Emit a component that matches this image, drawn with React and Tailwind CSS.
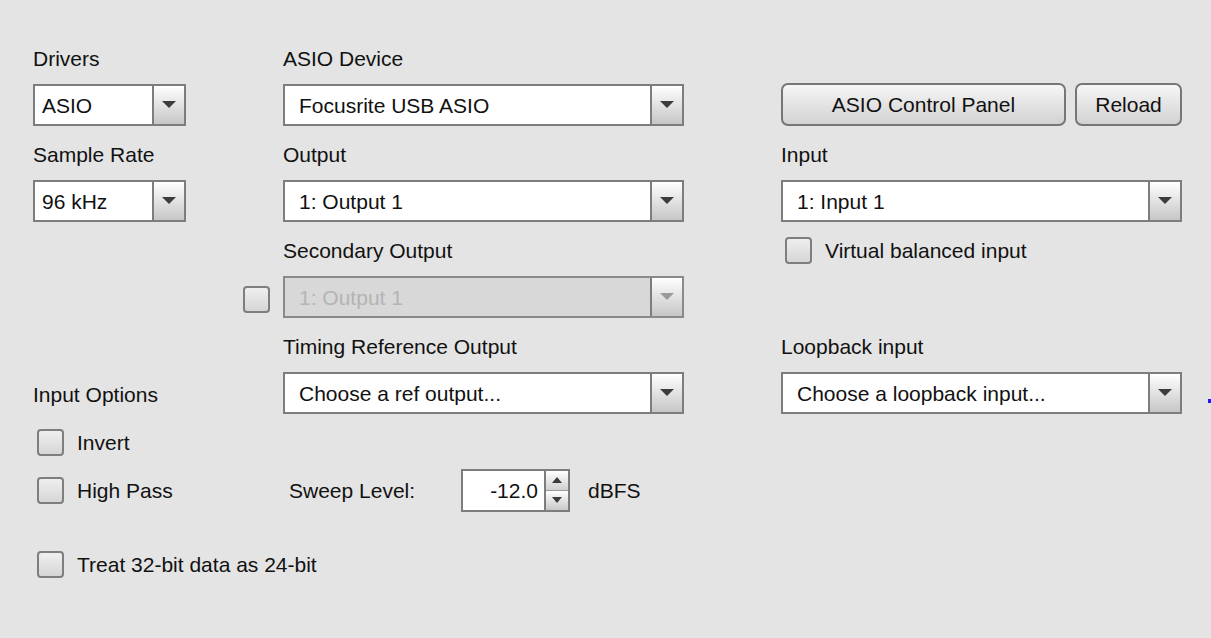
import { useState } from 'react';

const Arrow = ({ disabled }) => (
  <svg width="14" height="8" viewBox="0 0 14 8">
    <path d="M0 0h14L7 7z" fill={disabled ? '#9a9a9a' : '#3c3c3c'} />
  </svg>
);

const Combo = ({ value, disabled, pad = 'pl-[14px]' }) => (
  <div
    className={`flex h-[42px] w-full border-2 ${
      disabled ? 'border-[#8a8a8a] bg-[#d8d8d8] text-[#b4b4b4]' : 'border-[#7d7d7d] bg-white text-[#111]'
    }`}
  >
    <div className={`flex flex-1 items-center ${pad} whitespace-nowrap`}>{value}</div>
    <div className="flex w-[32px] items-center justify-center border-l-2 border-[#7d7d7d] bg-gradient-to-b from-white to-[#c6c6c6]">
      <Arrow disabled={disabled} />
    </div>
  </div>
);

const Check = ({ checked, onChange }) => (
  <button
    type="button"
    onClick={onChange}
    className="flex h-[27px] w-[27px] shrink-0 items-center justify-center rounded-[4px] border-2 border-[#7e7e7e] bg-gradient-to-b from-[#efefef] to-[#d6d6d6]"
  >
    {checked && <span className="text-[16px] leading-none text-[#222]">✓</span>}
  </button>
);

const Label = ({ children, className = '' }) => (
  <div className={`flex h-[48px] items-center ${className}`}>{children}</div>
);

const Button = ({ children, className = '' }) => (
  <button
    type="button"
    className={`flex h-[43px] items-center justify-center rounded-[7px] border-2 border-[#767676] bg-gradient-to-b from-[#f6f6f6] to-[#d2d2d2] text-[#111] ${className}`}
  >
    {children}
  </button>
);

export default function App() {
  const [checks, setChecks] = useState({});
  const toggle = (k) => setChecks((c) => ({ ...c, [k]: !c[k] }));

  return (
    <div
      className="relative h-[638px] w-full overflow-hidden bg-[#e4e4e4] pl-[33px] pt-[34px] text-[21px] leading-none text-[#111]"
      style={{ fontFamily: '"Liberation Sans", Arial, sans-serif' }}
    >
      <div className="grid grid-cols-[153px_97px_401px_97px_401px] auto-rows-[48px]">
        {/* row 1 */}
        <Label>Drivers</Label>
        <div />
        <Label>ASIO Device</Label>
        <div />
        <div />

        {/* row 2 */}
        <div className="pt-[2px]">
          <Combo value="ASIO" pad="pl-[7px]" />
        </div>
        <div />
        <div className="pt-[2px]">
          <Combo value="Focusrite USB ASIO" />
        </div>
        <div />
        <div className="flex gap-[9px] pt-[1px]">
          <Button className="w-[285px]">ASIO Control Panel</Button>
          <Button className="flex-1">Reload</Button>
        </div>

        {/* row 3 */}
        <Label>Sample Rate</Label>
        <div />
        <Label>Output</Label>
        <div />
        <Label>Input</Label>

        {/* row 4 */}
        <div className="pt-[2px]">
          <Combo value="96 kHz" pad="pl-[7px]" />
        </div>
        <div />
        <div className="pt-[2px]">
          <Combo value="1: Output 1" />
        </div>
        <div />
        <div className="pt-[2px]">
          <Combo value="1: Input 1" />
        </div>

        {/* row 5 */}
        <div />
        <div />
        <Label>Secondary Output</Label>
        <div />
        <Label className="gap-[13px] pl-[4px]">
          <Check checked={checks.vbi} onChange={() => toggle('vbi')} />
          <span>Virtual balanced input</span>
        </Label>

        {/* row 6 */}
        <div />
        <div className="flex items-center justify-end pr-[13px] pt-[2px]">
          <Check checked={checks.sec} onChange={() => toggle('sec')} />
        </div>
        <div className="pt-[2px]">
          <Combo value="1: Output 1" disabled />
        </div>
        <div />
        <div />

        {/* row 7 */}
        <div />
        <div />
        <Label>Timing Reference Output</Label>
        <div />
        <Label>Loopback input</Label>

        {/* row 8 */}
        <Label>Input Options</Label>
        <div />
        <div className="pt-[2px]">
          <Combo value="Choose a ref output..." />
        </div>
        <div />
        <div className="relative pt-[2px]">
          <Combo value="Choose a loopback input..." />
          <span className="absolute left-[427px] top-[29px] h-[4px] w-[4px] bg-[#1a1aff]" />
        </div>

        {/* row 9 */}
        <Label className="col-span-2 gap-[13px] pl-[4px]">
          <Check checked={checks.inv} onChange={() => toggle('inv')} />
          <span>Invert</span>
        </Label>
        <div />
        <div />
        <div />

        {/* row 10 */}
        <Label className="col-span-2 gap-[13px] pl-[4px]">
          <Check checked={checks.hp} onChange={() => toggle('hp')} />
          <span>High Pass</span>
        </Label>
        <div className="flex h-[48px] items-center pl-[6px]">
          <span className="w-[172px]">Sweep Level:</span>
          <div className="flex h-[43px] w-[109px] border-2 border-[#7d7d7d] bg-white">
            <div className="flex flex-1 items-center justify-end pr-[6px]">-12.0</div>
            <div className="flex w-[24px] flex-col border-l-2 border-[#7d7d7d]">
              <div className="flex flex-1 items-center justify-center border-b border-[#9a9a9a] bg-gradient-to-b from-white to-[#d0d0d0]">
                <svg width="10" height="6" viewBox="0 0 10 6">
                  <path d="M0 6h10L5 0z" fill="#3c3c3c" />
                </svg>
              </div>
              <div className="flex flex-1 items-center justify-center bg-gradient-to-b from-white to-[#c8c8c8]">
                <svg width="10" height="6" viewBox="0 0 10 6">
                  <path d="M0 0h10L5 6z" fill="#3c3c3c" />
                </svg>
              </div>
            </div>
          </div>
          <span className="pl-[18px]">dBFS</span>
        </div>
        <div />
        <div />
      </div>

      <div className="mt-[26px] flex h-[48px] items-center gap-[13px] pl-[4px]">
        <Check checked={checks.t32} onChange={() => toggle('t32')} />
        <span>Treat 32-bit data as 24-bit</span>
      </div>
    </div>
  );
}
